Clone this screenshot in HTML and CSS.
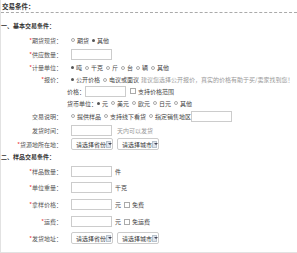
FILE: index.html
```html
<!DOCTYPE html>
<html lang="zh-CN">
<head>
    <meta charset="UTF-8">
    <title>交易条件</title>
    <link rel="stylesheet" href="styles.css">
</head>
<body>
    <div class="panel">
        <div class="panel-title">交易条件：</div>

        <div class="section">一、基本交易条件：</div>

        <div class="row h14">
            <div class="label"><i>*</i>期货现货：</div>
            <div class="value">
                <span class="radio"></span>期货
                <span class="radio on"></span>其他
            </div>
        </div>
        <div class="row h14">
            <div class="label"><i>*</i>供应数量：</div>
            <div class="value"><span class="input"></span></div>
        </div>
        <div class="row h13">
            <div class="label"><i>*</i>计量单位：</div>
            <div class="value">
                <span class="radio on"></span>吨
                <span class="radio"></span>千克
                <span class="radio"></span>斤
                <span class="radio"></span>台
                <span class="radio"></span>辆
                <span class="radio"></span>其他
            </div>
        </div>
        <div class="row h11">
            <div class="label"><i>*</i>报价：</div>
            <div class="value">
                <span class="radio on"></span>公开价格
                <span class="radio"></span>电议或面议
                <span class="hint">建议您选择公开报价，真实的价格有助于买/卖家找到您！</span>
            </div>
        </div>
        <div class="row h12">
            <div class="label"></div>
            <div class="value sub">
                价格：<span class="input"></span>
                <span class="check"></span>支持价格范围
            </div>
        </div>
        <div class="row h12">
            <div class="label"></div>
            <div class="value sub">
                货币单位：<span class="radio on"></span>元
                <span class="radio"></span>美元
                <span class="radio"></span>欧元
                <span class="radio"></span>日元
                <span class="radio"></span>其他
            </div>
        </div>
        <div class="row h14">
            <div class="label">交易说明：</div>
            <div class="value">
                <span class="radio"></span>提供样品
                <span class="radio"></span>支持线下看货
                <span class="radio"></span> 指定销售地区
                <span class="input"></span>
            </div>
        </div>
        <div class="row h14">
            <div class="label">发货时间：</div>
            <div class="value">
                <span class="input"></span><span class="hint">天内可以发货</span>
            </div>
        </div>
        <div class="row h14">
            <div class="label"><i>*</i>货源地所在地：</div>
            <div class="value">
                <span class="select">请选择省份<b></b></span>
                <span class="select">请选择城市<b></b></span>
            </div>
        </div>

        <div class="section s2">二、样品交易条件：</div>

        <div class="row h16">
            <div class="label"><i>*</i>样品数量：</div>
            <div class="value"><span class="input"></span>件</div>
        </div>
        <div class="row h17">
            <div class="label"><i>*</i>单位重量：</div>
            <div class="value"><span class="input"></span>千克</div>
        </div>
        <div class="row h17">
            <div class="label"><i>*</i>拿样价格：</div>
            <div class="value"><span class="input"></span>元 <span class="check"></span>免费</div>
        </div>
        <div class="row h17">
            <div class="label"><i>*</i>运费：</div>
            <div class="value"><span class="input"></span>元 <span class="check"></span>免运费</div>
        </div>
        <div class="row h16">
            <div class="label"><i>*</i>发货地址：</div>
            <div class="value">
                <span class="select">请选择省份<b></b></span>
                <span class="select">请选择城市<b></b></span>
            </div>
        </div>
    </div>
</body>
</html>
```

FILE: styles.css
```css
body {
    margin: 0;
    font-family: "Noto Sans CJK SC", "Noto Sans", sans-serif;
    font-size: 6px;
    color: #444;
    background-color: #fff;
}
.panel {
    width: 296px;
    height: 252px;
    border-left: 1px solid #e2e2e2;
    border-bottom: 1px solid #e2e2e2;
}
.panel-title {
    height: 12px;
    line-height: 12px;
    padding-left: 1px;
    font-size: 6.5px;
    font-weight: bold;
    color: #333;
    border-bottom: 1px dashed #aaa;
    margin-bottom: 6px;
}
.section {
    height: 14px;
    line-height: 14px;
    font-weight: bold;
    color: #333;
}
.section.s2 {
    height: 12px;
    line-height: 12px;
}
.row {
    display: flex;
    align-items: center;
}
.h11 { height: 11px; }
.h12 { height: 12px; }
.h13 { height: 13px; }
.h14 { height: 14px; }
.h16 { height: 16px; }
.h17 { height: 17px; }
.label {
    width: 61px;
    text-align: right;
    color: #555;
    white-space: nowrap;
}
.label i {
    font-style: normal;
    color: #e33;
}
.value {
    display: flex;
    align-items: center;
    margin-left: 9px;
    white-space: nowrap;
}
.value.sub {
    margin-left: 5px;
}
.radio {
    display: inline-block;
    width: 4px;
    height: 4px;
    border: 1px solid #aaa;
    border-radius: 50%;
    margin: 0 2px 0 3px;
    box-sizing: border-box;
}
.value > .radio:first-child {
    margin-left: 0;
}
.radio.on {
    border: none;
    background-color: #555;
    width: 3px;
    height: 3px;
}
.check {
    display: inline-block;
    width: 4px;
    height: 4px;
    border: 1px solid #aaa;
    margin: 0 2px 0 3px;
}
.hint {
    color: #999;
    margin-left: 2px;
}
.input {
    display: inline-block;
    width: 41px;
    height: 11px;
    border: 1px solid #ccc;
    box-sizing: border-box;
    margin-right: 3px;
}
.value.sub .input {
    margin-right: 1px;
}
.select {
    display: inline-flex;
    align-items: center;
    justify-content: space-between;
    width: 42px;
    height: 12px;
    padding: 0 1px 0 4px;
    margin-right: 4px;
    border: 1px solid #ccc;
    border-radius: 2px;
    box-sizing: border-box;
    color: #333;
}
.select b {
    width: 7px;
    height: 7px;
    background-color: #dde3ea;
    border: 1px solid #b8c2cc;
    box-sizing: border-box;
    position: relative;
}
.select b::after {
    content: "";
    position: absolute;
    left: 1px;
    top: 1px;
    width: 0;
    height: 0;
    border-left: 2px solid transparent;
    border-right: 2px solid transparent;
    border-top: 2px solid #445;
}
```
